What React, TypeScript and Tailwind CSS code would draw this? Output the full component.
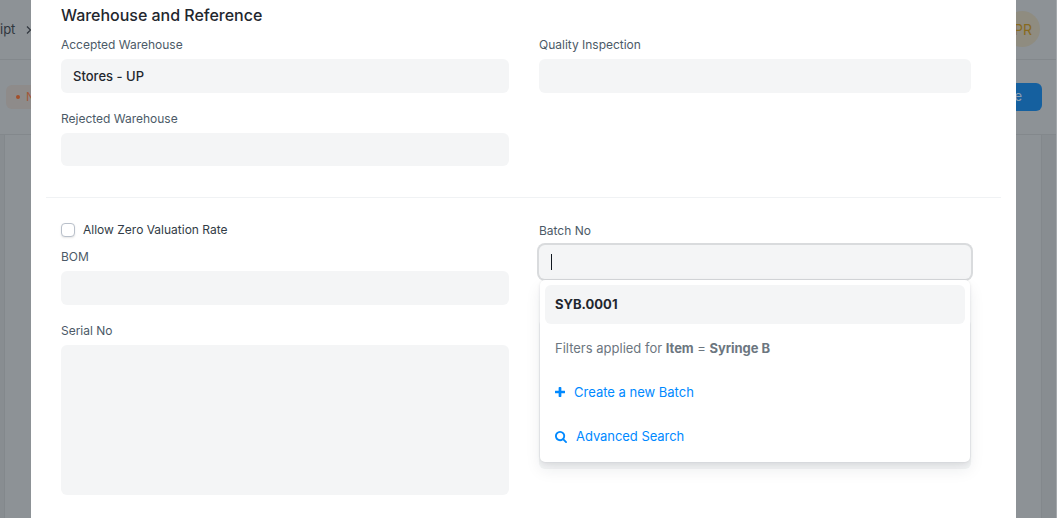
import type { ReactNode } from 'react';

function PlusIcon() {
  return (
    <svg viewBox="192 128 1408 1408" fill="currentColor" className="mb-px mr-[9px] h-[10px] w-[10px]">
      <path d="M1600 736v192q0 40-28 68t-68 28h-416v416q0 40-28 68t-68 28h-192q-40 0-68-28t-28-68v-416h-416q-40 0-68-28t-28-68v-192q0-40 28-68t68-28h416v-416q0-40 28-68t68-28h192q40 0 68 28t28 68v416h416q40 0 68 28t28 68z" />
    </svg>
  );
}

function SearchIcon() {
  return (
    <svg viewBox="64 128 1664 1664" fill="currentColor" className="mr-[9px] h-3 w-3">
      <path d="M1216 832q0-185-131.5-316.5t-316.5-131.5-316.5 131.5-131.5 316.5 131.5 316.5 316.5 131.5 316.5-131.5 131.5-316.5zm512 832q0 52-38 90t-90 38q-54 0-90-38l-343-342q-179 124-399 124-143 0-273.5-55.5t-225-150-150-225-55.5-273.5 55.5-273.5 150-225 225-150 273.5-55.5 273.5 55.5 225 150 150 225 55.5 273.5q0 220-124 399l343 343q37 37 37 90z" />
    </svg>
  );
}

function Label({ children }: { children: ReactNode }) {
  return <div className="h-[18px] text-[12px] leading-[18px] tracking-[-0.01px] text-[#4c5a67]">{children}</div>;
}

function Field({ label, value, className = 'h-[34px]' }: { label: string; value?: string; className?: string }) {
  return (
    <div>
      <Label>{label}</Label>
      <div className={`mt-[5px] flex items-center rounded-md bg-[#f4f5f6] px-3 pt-px text-[13px] font-medium tracking-[0.02px] text-[#1f272e] ${className}`}>
        {value}
      </div>
    </div>
  );
}

function Backdrop() {
  return (
    <div className="flex h-full flex-col border-r border-[#a4a8ac] bg-[#888d91]">
      <header className="flex h-[60px] shrink-0 items-center justify-between border-b border-[#83888c] bg-[#8d9296] pr-4">
        <div className="flex items-center text-[13px] leading-5 text-[#30363d]">
          <span className="w-[25px] pb-[2px]">ipt</span>
          <svg width="8" height="10" viewBox="0 0 8 10" fill="none">
            <path d="M2 1.5 5.5 5 2 8.5" stroke="#30363d" strokeWidth="1.2" />
          </svg>
        </div>
        <div className="mb-px flex h-9 w-9 items-center justify-end rounded-full bg-[#8f8c80] pr-[8px] text-[14px] text-[#886a1e]">PR</div>
      </header>
      <div className="flex h-[75px] shrink-0 items-center justify-between border-b border-[#83888c] bg-[#8d9296] pr-[14px]">
        <div className="ml-[6px] flex h-6 w-20 items-center rounded-md bg-[#8e8b8a] pl-[10px] text-[12px] text-[#a2593a]">
          <span className="mr-[6px] h-1 w-1 rounded-full bg-[#a2502b]" />
          Not Saved
        </div>
        <div className="flex h-7 w-16 items-center justify-end rounded-md bg-[#15609f] pr-[20px] text-[13px] text-[#8d9fb0]">Save</div>
      </div>
      <div className="ml-1 mr-[14px] grow border-x border-[#83888c] bg-[#8d9296]" />
    </div>
  );
}

function LinkMenu() {
  return (
    <div className="absolute left-px right-px top-[59px] z-10 h-[182px] rounded-[5px] bg-white p-[5px] text-[13px] shadow-[0_0_2px_rgba(31,39,46,0.08),0_8px_16px_rgba(31,39,46,0.08),0_2px_4px_rgba(31,39,46,0.06)]">
      <div className="flex h-[39px] items-center rounded-md bg-[#f4f5f6] px-[10px] font-bold text-[#1f272e]">SYB.0001</div>
      <div className="mt-[5px] flex h-[39px] items-center px-[10px] pt-px text-[#6c7680]">
        <span>Filters applied for <b className="tracking-[-0.06px]">Item</b> = <b className="tracking-[-0.06px]">Syringe B</b></span>
      </div>
      <div className="mt-[5px] flex h-[39px] items-center px-[10px] text-[#0089ff]">
        <PlusIcon />Create a new Batch
      </div>
      <div className="mt-[5px] flex h-[39px] items-center px-[10px] tracking-[-0.05px] text-[#0089ff]">
        <SearchIcon />Advanced Search
      </div>
    </div>
  );
}

export default function App() {
  return (
    <div className="relative h-[518px] w-[1057px] overflow-hidden font-['Inter',sans-serif]">
      <Backdrop />
      <main className="absolute inset-y-0 left-[31px] w-[985px] bg-white px-[15px]">
        <section className="h-[198px] border-b border-[#f0f2f4] px-[15px] pt-[3px]">
          <h2 className="h-[24px] text-[16px] font-medium leading-[24px] tracking-[-0.02px] text-[#1f272e]">Warehouse and Reference</h2>
          <div className="mt-[9px] grid grid-cols-[448px_432px] gap-x-[30px]">
            <div className="flex flex-col gap-[17px]">
              <Field label="Accepted Warehouse" value="Stores - UP" />
              <Field label="Rejected Warehouse" className="h-[33px]" />
            </div>
            <Field label="Quality Inspection" />
          </div>
        </section>
        <section className="grid grid-cols-[448px_432px] gap-x-[30px] px-[15px] pt-[23px]">
          <div>
            <div className="flex h-[18px] items-center text-[12px] text-[#323c46]">
              <span className="mr-2 h-[14px] w-[14px] rounded-[4px] border border-[#b9c0ca] bg-white shadow-[0_1px_2px_rgba(0,0,0,0.1)]" />
              Allow Zero Valuation Rate
            </div>
            <div className="mt-[9px] flex flex-col gap-[17px]">
              <Field label="BOM" />
              <Field label="Serial No" className="h-[150px]" />
            </div>
          </div>
          <div className="relative pt-px">
            <Label>Batch No</Label>
            <div className="mt-[5px] flex h-[34px] items-center rounded-md bg-[#f4f5f6] pl-3 shadow-[0_0_0_2px_#d9dbdd]">
              <span className="h-4 w-px bg-[#111820]" />
            </div>
            <LinkMenu />
            <div className="mt-10 h-[150px] rounded-md bg-[#f4f5f6]" />
          </div>
        </section>
      </main>
    </div>
  );
}
